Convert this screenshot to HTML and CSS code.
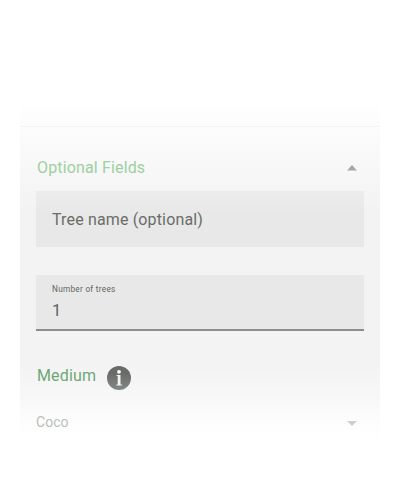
FILE: index.html
```html
<!DOCTYPE html>
<html lang="en">
<head>
    <meta charset="UTF-8">
    <meta name="viewport" content="width=device-width, initial-scale=1.0">
    <title>Optional Fields</title>
    <link rel="stylesheet" href="styles.css">
</head>
<body>
    <div class="panel">
        <div class="section-header">
            <h2 class="section-title">Optional Fields</h2>
            <svg class="arrow" width="10" height="6" viewBox="0 0 10 6"><path d="M0 5.5L5 0L10 5.5Z" fill="#a3aaa3"/></svg>
        </div>

        <div class="field name-field">
            <span class="placeholder">Tree name (optional)</span>
        </div>

        <div class="field count-field">
            <span class="field-label">Number of trees</span>
            <span class="field-value">1</span>
        </div>

        <div class="medium-header">
            <h2 class="medium-title">Medium</h2>
            <svg class="info" width="24" height="24" viewBox="0 0 24 24">
                <defs>
                    <linearGradient id="info-fill" x1="0" y1="0" x2="0" y2="1">
                        <stop offset="0.3" stop-color="#686b68"/>
                        <stop offset="1" stop-color="#858985"/>
                    </linearGradient>
                </defs>
                <circle cx="12" cy="12" r="12" fill="url(#info-fill)"/>
                <circle cx="12" cy="5.8" r="1.9" fill="#fff"/>
                <path d="M9.6 9H13.5V18.6H15V19.6H9.4V18.6H10.7V10H9.6Z" fill="#f4f4f4"/>
            </svg>
        </div>

        <div class="select">
            <span class="select-value">Coco</span>
            <svg class="arrow" width="10" height="5" viewBox="0 0 10 5"><path d="M0 0H10L5 5Z" fill="#cbd2cb"/></svg>
        </div>
    </div>
</body>
</html>
```
FILE: styles.css
```css
body {
    margin: 0;
    padding: 105px 20px 0;
    background-color: #fff;
    font-family: Roboto, Arial, sans-serif;
}
.panel {
    box-sizing: border-box;
    height: 335px;
    padding-top: 21px;
    background: linear-gradient(#fefefe 0, #fcfcfc 22px, #f8f8f8 60px, #f3f3f3 105px, #f3f3f3 262px, #f8f8f8 294px, #fdfdfd 318px, #fff 335px);
}
.section-header {
    box-sizing: border-box;
    display: flex;
    align-items: center;
    justify-content: space-between;
    height: 65px;
    padding: 17px 23px 0 17px;
    border-top: 1px solid #f2f2f2;
}
.section-title,
.medium-title {
    margin: 0;
    font-size: 16px;
    font-weight: 400;
    line-height: 20px;
    letter-spacing: 0.15px;
}
.section-title {
    color: #9dd0a0;
}
.arrow {
    display: block;
}
.field {
    box-sizing: border-box;
    margin: 0 16px;
    padding: 0 16px;
    height: 56px;
    background-color: #e8e8e8;
}
.name-field {
    background: linear-gradient(#ececec, #e8e8e8 24px);
}
.placeholder {
    display: block;
    font-size: 16px;
    line-height: 56px;
    padding-top: 1px;
    letter-spacing: 0.15px;
    color: #686d68;
}
.count-field {
    margin-top: 28px;
    padding-top: 8px;
    border-bottom: 2px solid #889088;
}
.field-label {
    display: block;
    font-size: 8.2px;
    line-height: 12px;
    letter-spacing: 0.3px;
    color: #606560;
}
.field-value {
    display: block;
    margin-top: 5px;
    font-size: 16.5px;
    line-height: 21px;
    color: #606060;
}
.medium-header {
    display: flex;
    align-items: center;
    gap: 11px;
    margin-top: 35px;
    padding-left: 17px;
}
.medium-title {
    margin-top: -4px;
    color: #6fa775;
}
.info {
    display: block;
}
.select {
    display: flex;
    align-items: center;
    justify-content: space-between;
    margin-top: 22px;
    padding: 0 23px 0 16px;
}
.select-value {
    font-size: 14px;
    line-height: 20px;
    letter-spacing: 0.05px;
    color: #b9c0b9;
}
.select .arrow {
    margin-top: 2px;
}
```
